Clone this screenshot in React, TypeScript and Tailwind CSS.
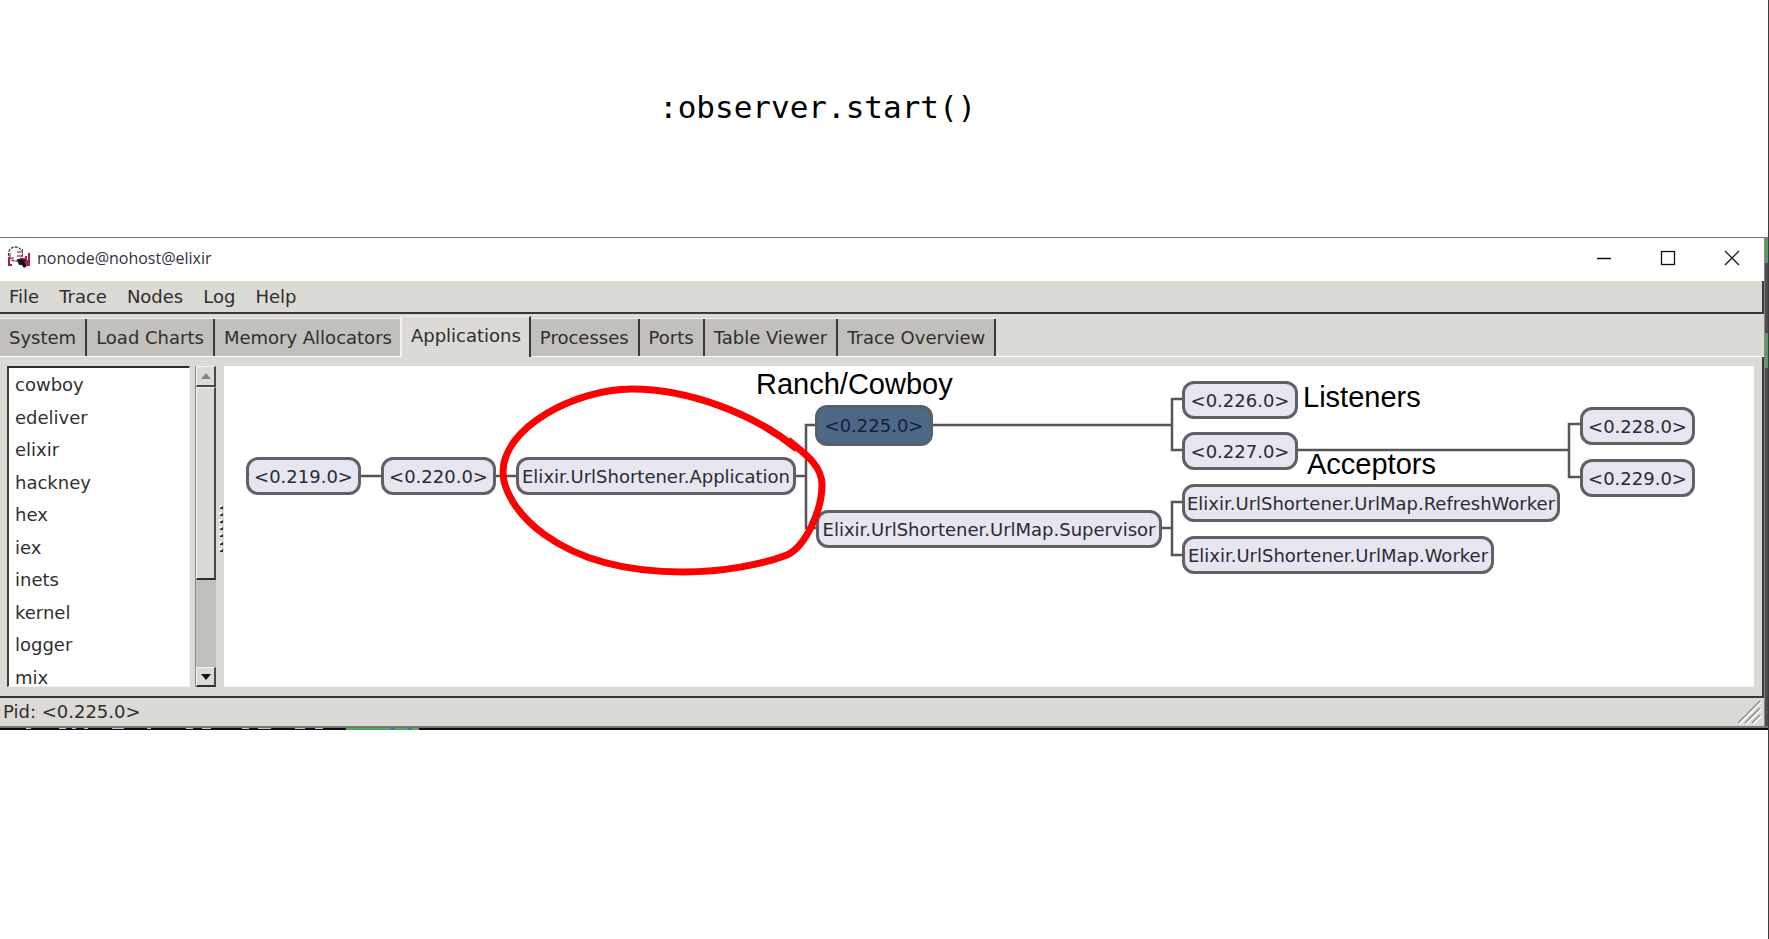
import React from "react";

const menus = ["File", "Trace", "Nodes", "Log", "Help"];
const tabs = [
  "System",
  "Load Charts",
  "Memory Allocators",
  "Applications",
  "Processes",
  "Ports",
  "Table Viewer",
  "Trace Overview",
];
const apps = ["cowboy", "edeliver", "elixir", "hackney", "hex", "iex", "inets", "kernel", "logger", "mix"];

type Node = { label: string; pos: string; selected?: boolean };

const nodes: Node[] = [
  { label: "<0.219.0>", pos: "left-[22px] top-[91px] w-[115px]" },
  { label: "<0.220.0>", pos: "left-[157px] top-[91px] w-[115px]" },
  { label: "Elixir.UrlShortener.Application", pos: "left-[292px] top-[91px] w-[280px]" },
  { label: "<0.225.0>", pos: "left-[591px] top-[39px] w-[118px]", selected: true },
  { label: "Elixir.UrlShortener.UrlMap.Supervisor", pos: "left-[592px] top-[144px] w-[346px]" },
  { label: "<0.226.0>", pos: "left-[958px] top-[15px] w-[116px]" },
  { label: "<0.227.0>", pos: "left-[958px] top-[66px] w-[116px]" },
  { label: "Elixir.UrlShortener.UrlMap.RefreshWorker", pos: "left-[958px] top-[118px] w-[378px]" },
  { label: "Elixir.UrlShortener.UrlMap.Worker", pos: "left-[958px] top-[170px] w-[312px]" },
  { label: "<0.228.0>", pos: "left-[1356px] top-[41px] w-[115px]" },
  { label: "<0.229.0>", pos: "left-[1356px] top-[93px] w-[115px]" },
];

function ObserverIcon() {
  return (
    <svg width="24" height="24" viewBox="0 0 24 24" aria-hidden="true">
      <path d="M2 11v9M2 19h3M16 4h-1M21 8h1v11h-2" fill="none" stroke="#9b2346" strokeWidth="2" />
      <path d="M11 12h7v-2h2v4h2v5h-10z" fill="#a32148" />
      <circle cx="8.500" cy="8" r="7" fill="#fff" stroke="#4a3b44" strokeWidth="1.300" strokeDasharray="3 1" />
      <path d="M3 7v6M4 12h3M10 6h4M10 10h5" fill="none" stroke="#b4506f" strokeWidth="1.500" />
      <path d="M10 13l9 1-2 2 3 4-3 2-3-4-2 1z" fill="#17090f" />
    </svg>
  );
}

function TitleBar() {
  return (
    <header className="flex h-[43px] items-center bg-white pb-[3px] pl-[7px]">
      <ObserverIcon />
      <h1 className="ml-[6px] flex-1 font-['Open_Sans',sans-serif] text-[16px] leading-6 text-[#33303f]">
        nonode@nohost@elixir
      </h1>
      <button aria-label="Minimize" className="flex h-full w-16 items-center justify-center">
        <svg width="16" height="16" viewBox="0 0 16 16">
          <path d="M1 8.500h14" stroke="#111" strokeWidth="1.500" />
        </svg>
      </button>
      <button aria-label="Maximize" className="flex h-full w-16 items-center justify-center">
        <svg width="16" height="16" viewBox="0 0 16 16">
          <rect x="1.500" y="1.500" width="13" height="13" fill="none" stroke="#111" strokeWidth="1.300" />
        </svg>
      </button>
      <button aria-label="Close" className="flex h-full w-16 items-center justify-center">
        <svg width="16" height="16" viewBox="0 0 16 16">
          <path d="M1 1l14 14M15 1L1 15" stroke="#222" strokeWidth="1.400" />
        </svg>
      </button>
    </header>
  );
}

function MenuBar() {
  return (
    <nav className="flex h-[33px] items-center gap-[20px] border-r-2 border-b-2 border-[#3a3838] bg-[#dbdad5] pl-[9px]">
      {menus.map((m) => (
        <button key={m}>{m}</button>
      ))}
    </nav>
  );
}

function TabBar() {
  return (
    <div role="tablist" className="flex h-[43px] items-end bg-[#dbdad5]">
      {tabs.map((t) =>
        t === "Applications" ? (
          <button
            key={t}
            role="tab"
            aria-selected="true"
            className="h-[41px] border-t border-r-2 border-l-2 border-t-[#f2f2ee] border-r-[#3a3838] border-l-[#f2f2ee] pr-[8px] pb-[2px] pl-[9px]"
          >
            {t}
          </button>
        ) : (
          <button
            key={t}
            role="tab"
            aria-selected="false"
            className="h-[39px] border-t border-b border-t-[#eeeeea] border-b-[#fbfbf9] bg-[#c1c0ba] pl-[9px]"
          >
            <span
              className={
                t === "Memory Allocators"
                  ? "flex h-full items-center pr-[8px]"
                  : "flex h-full items-center border-r-2 border-[#3a3838] pr-[9px]"
              }
            >
              {t}
            </span>
          </button>
        ),
      )}
      <div className="h-[1px] flex-1 bg-[#fbfbf9]" />
    </div>
  );
}

function AppList() {
  return (
    <div className="ml-[7px] h-[321px] w-[183px] overflow-hidden border-t-2 border-r border-b border-l-2 border-t-[#2e2d2b] border-r-[#f0f0ec] border-b-[#f0f0ec] border-l-[#3f3e3b] bg-white pt-[1px]">
      <ul className="grid h-[325px] auto-rows-fr">
        {apps.map((a) => (
          <li key={a} className="flex">
            <button className="flex w-full items-center pl-[6px] text-left">{a}</button>
          </li>
        ))}
      </ul>
    </div>
  );
}

function ScrollBar() {
  return (
    <div className="ml-[5px] flex h-[321px] w-[21px] flex-col border-l border-[#8c8b86] bg-[#c1c0ba]">
      <button
        aria-label="Scroll up"
        className="flex h-[21px] items-center justify-center border-t border-r-2 border-b-2 border-l border-t-[#f4f4f0] border-r-[#4a4946] border-b-[#4a4946] border-l-[#f4f4f0] bg-[#dbdad5]"
      >
        <svg width="10" height="6" viewBox="0 0 10 6">
          <path d="M0 6l5-6 5 6z" fill="#84837e" />
        </svg>
      </button>
      <div className="h-[193px] border-t border-r-2 border-b-2 border-l border-t-[#f4f4f0] border-r-[#4a4946] border-b-[#2e2d2b] border-l-[#f4f4f0] bg-[#dbdad5]" />
      <div className="flex-1" />
      <button
        aria-label="Scroll down"
        className="flex h-[20px] items-center justify-center border-t border-r-2 border-b-2 border-l border-t-[#f4f4f0] border-r-[#4a4946] border-b-[#2e2d2b] border-l-[#f4f4f0] bg-[#dbdad5]"
      >
        <svg width="10" height="6" viewBox="0 0 10 6">
          <path d="M0 0h10L5 6z" fill="#111" />
        </svg>
      </button>
    </div>
  );
}

function Splitter() {
  return (
    <div className="flex h-[321px] w-[8px] items-center justify-end pt-[4px]">
      <svg width="5" height="48" viewBox="0 0 5 48" aria-hidden="true">
        {[1, 8, 15, 22, 29, 37, 44].map((y) => (
          <g key={y}>
            <path d={`M0 ${y - 1}h3v2h-3z`} fill="#fff" />
            <path d={`M4 ${y}v3h-3v-1z`} fill="#2e2d2b" />
          </g>
        ))}
      </svg>
    </div>
  );
}

function Canvas() {
  return (
    <main className="relative mr-[8px] h-[321px] flex-1 overflow-hidden bg-white">
      <svg className="absolute top-0 left-0" width="1530" height="321" viewBox="0 0 1530 321" aria-hidden="true">
        <path
          d="M137 110h20M272 110h20M572 110h10M591 59h-9v103h10M709 59h239M958 33h-10v51h10M1074 84h271M1356 58h-11v53h11M938 162h10M958 136h-10v53h10"
          fill="none"
          stroke="#555557"
          strokeWidth="2.500"
        />
      </svg>
      {nodes.map((n) => (
        <button
          key={n.label}
          className={`absolute flex items-center justify-center rounded-[12px] border-3 pt-[1px] whitespace-nowrap ${n.pos} ${
            n.selected ? "h-[41px] border-[#566069] bg-[#4b6887] text-[#152236]" : "h-[38px] border-[#616165] bg-[#e6e5f0] text-[#2b2b31]"
          }`}
        >
          {n.label}
        </button>
      ))}
      <div className="font-['Liberation_Sans',Arial,sans-serif] text-[29px] leading-8 text-black">
        <p className="absolute top-[2px] left-[532px]">Ranch/Cowboy</p>
        <p className="absolute top-[15px] left-[1079px]">Listeners</p>
        <p className="absolute top-[82px] left-[1083px]">Acceptors</p>
      </div>
      <svg className="absolute top-0 left-0" width="640" height="321" viewBox="0 0 640 321" aria-hidden="true">
        <path
          d="M573 83C528 46 462 23 408 23C350 23 279 62 279 106C279 140 330 206 459 206C500 206 540 198 563 189C582 180 598 144 598 119C598 98 578 86 564 74"
          fill="none"
          stroke="#fe0000"
          strokeWidth="7"
        />
      </svg>
    </main>
  );
}

function StatusBar() {
  return (
    <footer className="flex h-[28px] items-center justify-between bg-[#dbdad5] pr-[2px] pl-[3px]">
      <p>Pid: &lt;0.225.0&gt;</p>
      <svg width="24" height="24" viewBox="0 0 24 24" aria-hidden="true">
        <path d="M1 24L23 2M8 24L23 9M15 24L23 16" stroke="#fafaf8" strokeWidth="2" />
        <path d="M0 23L22 1M7 23L22 8M14 23L22 15" stroke="#8f8e89" strokeWidth="1.500" />
      </svg>
    </footer>
  );
}

function BottomEdge() {
  return (
    <div className="h-[4px] border-t-2 border-[#77777a] bg-[#0c0c10]">
      <svg className="block" width="420" height="2" viewBox="0 0 420 2" aria-hidden="true">
        <path
          d="M26 0h5v1h-5zM59 0h7v1h-7zM72 0h4v1h-4zM84 0h4v1h-4zM112 0h12v1h-12zM147 0h4v1h-4zM186 0h7v1h-7zM202 0h9v1h-9zM242 0h7v1h-7zM258 0h13v1h-13zM295 0h10v1h-10zM315 0h8v1h-8z"
          fill="#c9c9cc"
        />
        <path d="M346 0h73v2h-73z" fill="#4fae54" />
        <path d="M391 0h4v2h-4zM408 0h4v2h-4z" fill="#4a6fb5" />
      </svg>
    </div>
  );
}

export default function App() {
  return (
    <div className="min-h-screen border-r border-[#3c3c3e] bg-white font-['DejaVu_Sans',sans-serif] text-[18px] leading-6 text-[#2f2f2f]">
      <div className="flex h-[237px] items-start pt-[87px] pl-[659px]">
        <p className="font-['DejaVu_Sans_Mono',monospace] text-[31px] leading-10 text-black">:observer.start()</p>
      </div>
      <div className="border-t border-[#77777a]">
        <div className="flex">
          <div className="min-w-0 flex-1">
            <TitleBar />
            <MenuBar />
            <TabBar />
            <div className="border-r-2 border-b-2 border-[#3a3838] bg-[#dbdad5] pt-[9px] pb-[9px]">
              <div className="flex">
                <AppList />
                <ScrollBar />
                <Splitter />
                <Canvas />
              </div>
            </div>
            <StatusBar />
          </div>
          <div className="flex w-[4px] flex-col border-l border-[#8a8a8c] bg-[#4c4c4e]">
            <div className="h-[25px] bg-[#5b9a5e]" />
            <div className="h-[70px]" />
            <div className="h-[35px] bg-[#5b9a5e]" />
          </div>
        </div>
        <BottomEdge />
      </div>
    </div>
  );
}
